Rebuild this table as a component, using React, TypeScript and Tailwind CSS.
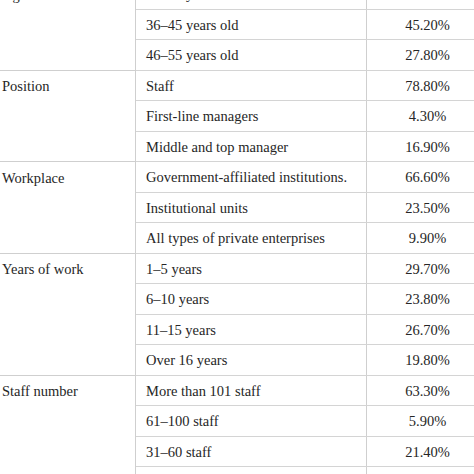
type Row = { item: string; pct: string }
type Group = { label: string; rows: Row[] }

const groups: Group[] = [
  {
    label: 'Age',
    rows: [
      { item: '26–35 years old', pct: '24.60%' },
      { item: '36–45 years old', pct: '45.20%' },
      { item: '46–55 years old', pct: '27.80%' },
    ],
  },
  {
    label: 'Position',
    rows: [
      { item: 'Staff', pct: '78.80%' },
      { item: 'First-line managers', pct: '4.30%' },
      { item: 'Middle and top manager', pct: '16.90%' },
    ],
  },
  {
    label: 'Workplace',
    rows: [
      { item: 'Government-affiliated institutions.', pct: '66.60%' },
      { item: 'Institutional units', pct: '23.50%' },
      { item: 'All types of private enterprises', pct: '9.90%' },
    ],
  },
  {
    label: 'Years of work',
    rows: [
      { item: '1–5 years', pct: '29.70%' },
      { item: '6–10 years', pct: '23.80%' },
      { item: '11–15 years', pct: '26.70%' },
      { item: 'Over 16 years', pct: '19.80%' },
    ],
  },
  {
    label: 'Staff number',
    rows: [
      { item: 'More than 101 staff', pct: '63.30%' },
      { item: '61–100 staff', pct: '5.90%' },
      { item: '31–60 staff', pct: '21.40%' },
      { item: 'Less than 30 staff', pct: '9.40%' },
    ],
  },
]

export default function App() {
  return (
    <div
      className="h-[474px] w-[474px] overflow-hidden bg-white text-[14.5px] text-[#262626]"
      style={{ fontFamily: '"Liberation Serif", "Times New Roman", serif' }}
    >
      <div className="-mt-[21px]">
        {groups.map((g) => (
          <div key={g.label} className="flex">
            <div className="w-[136px] shrink-0 border-r border-b border-[#cfcfcf] pl-[2px]">
              <div className="flex h-[30.5px] items-center pt-[3px]">{g.label}</div>
            </div>
            <div className="flex-1">
              {g.rows.map((r) => (
                <div key={r.item} className="flex h-[30.5px] border-b border-[#d4d4d4]">
                  <div className="flex w-[231px] shrink-0 items-center border-r border-[#cfcfcf] pt-[3px] pl-[10px] whitespace-nowrap">
                    {r.item}
                  </div>
                  <div className="flex flex-1 items-center justify-center pt-[3px] pl-[14px]">{r.pct}</div>
                </div>
              ))}
            </div>
          </div>
        ))}
      </div>
    </div>
  )
}
